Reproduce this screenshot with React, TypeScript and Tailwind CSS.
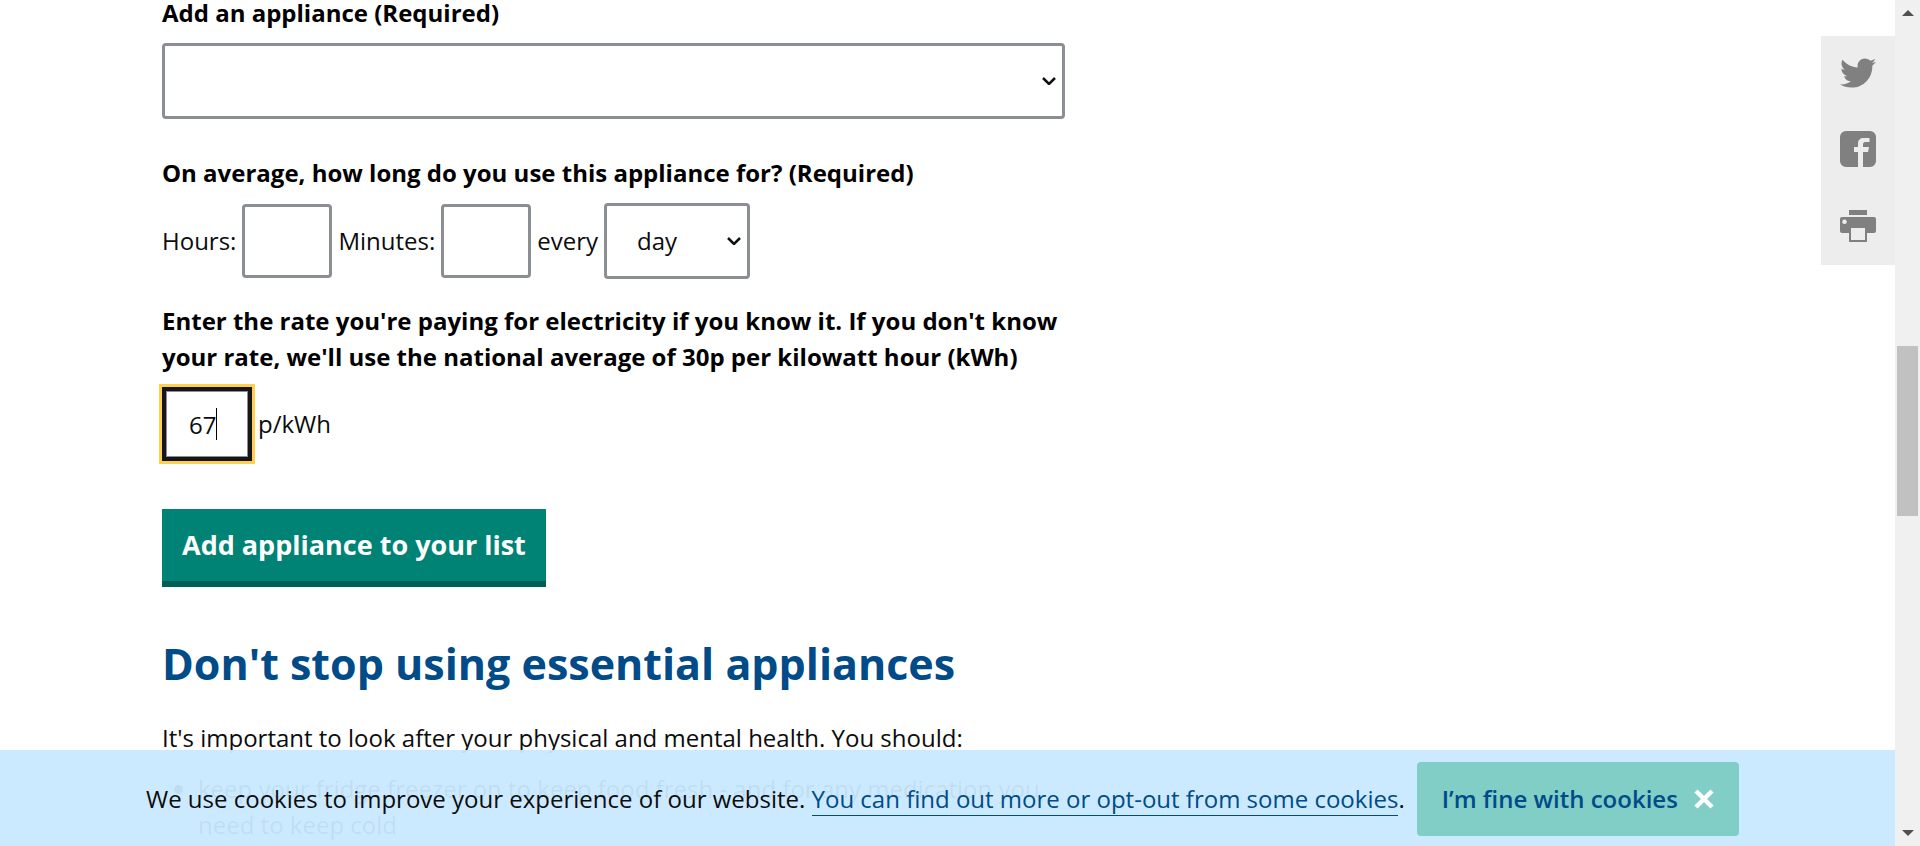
import type { ReactNode } from "react";
import { FaTwitter } from "react-icons/fa";

const field =
  "rounded border-3 border-[#8b8e92] bg-white text-2xl/9 text-[#0b0c0c] outline-none";

function Chevron() {
  return (
    <svg
      viewBox="0 0 14 8"
      aria-hidden="true"
      className="pointer-events-none absolute right-[9px] top-1/2 h-2 w-3.5 -translate-y-1/2"
      fill="none"
      stroke="#111"
      strokeWidth="2.500"
    >
      <path d="M1 1l6 6 6-6" />
    </svg>
  );
}

function ShareLink({ label, children }: { label: string; children: ReactNode }) {
  return (
    <a href="#share" aria-label={label} className="flex h-9 w-9 items-center justify-center">
      {children}
    </a>
  );
}

function ShareBar() {
  return (
    <nav
      aria-label="Share this page"
      className="absolute right-0 top-9 flex w-[74px] flex-col items-center gap-10 bg-[#ededed] pb-[22px] pt-[19px] text-[#808080]"
    >
      <ShareLink label="Share on Twitter">
        <FaTwitter className="h-9 w-9" />
      </ShareLink>
      <ShareLink label="Share on Facebook">
        <svg viewBox="0 0 36 36" className="h-9 w-9" fill="currentColor">
          <path d="M6 0h24a6 6 0 0 1 6 6v24a6 6 0 0 1-6 6h-7V21h5l1-5h-6v-2.500c0-1.500.5-2.500 2.500-2.500h4V7h-5.500c-4 0-6 2-6 5.500V16h-4v5h4v15H6a6 6 0 0 1-6-6V6a6 6 0 0 1 6-6z" />
        </svg>
      </ShareLink>
      <ShareLink label="Print this page">
        <svg viewBox="0 0 36 36" className="h-9 w-9" fill="currentColor" fillRule="evenodd">
          <path d="M9 3h18v5H9z" />
          <path d="M2 10h32a2 2 0 0 1 2 2v12a2 2 0 0 1-2 2h-7v9H9v-9H2a2 2 0 0 1-2-2V12a2 2 0 0 1 2-2zM11 21v12h14V21zM4.500 12.500a2.300 2.300 0 1 0 .01 0z" />
        </svg>
      </ShareLink>
    </nav>
  );
}

function ScrollTrack() {
  return (
    <div aria-hidden="true" className="flex w-[25px] shrink-0 flex-col items-center bg-[#f0f0f0] py-2.5">
      <svg viewBox="0 0 12 6" className="h-1.5 w-3" fill="#505050">
        <path d="M6 0l6 6H0z" />
      </svg>
      <div className="flex w-full grow flex-col items-center">
        <div className="grow-[330]" />
        <div className="h-[170px] w-[21px] bg-[#c1c1c1]" />
        <div className="grow-[314]" />
      </div>
      <svg viewBox="0 0 12 6" className="h-1.5 w-3" fill="#505050">
        <path d="M0 0h12L6 6z" />
      </svg>
    </div>
  );
}

function CookieBanner() {
  return (
    <div className="absolute inset-x-0 bottom-0 flex items-center bg-[#c9e9ff]/95 pb-2.5 pl-[146px] pt-3">
      <p className="text-2xl/9 text-[#0b0c0c]">
        We use cookies to improve your experience of our website.{" "}
        <a href="#cookies" className="border-b border-[#004b88] text-[#004b88]">
          You can find out more or opt-out from some cookies
        </a>
        .
      </p>
      <button
        type="button"
        className="ml-3 flex h-[74px] items-center gap-4 rounded bg-[#81cec6] px-[25px] text-2xl/9 font-semibold text-[#004b88]"
      >
        I’m fine with cookies
        <svg viewBox="0 0 20 20" aria-hidden="true" className="h-5 w-5" stroke="#fff" strokeWidth="4.500">
          <path d="M2 2l16 16M18 2L2 18" />
        </svg>
      </button>
    </div>
  );
}

export default function App() {
  return (
    <div className="flex h-screen overflow-hidden bg-white font-['Open_Sans','Noto_Sans',sans-serif] text-2xl/9 text-[#0b0c0c]">
      <div className="relative min-w-0 grow overflow-hidden">
        <main className="-mt-[5px] ml-[162px] max-w-[903px]">
          <form>
            <label htmlFor="appliance" className="block font-bold text-black">
              Add an appliance (Required)
            </label>
            <div className="relative mt-3">
              <select id="appliance" className={`${field} h-[76px] w-full appearance-none px-[30px]`}>
                <option></option>
              </select>
              <Chevron />
            </div>

            <fieldset className="mt-9">
              <legend className="font-bold text-black">
                On average, how long do you use this appliance for? (Required)
              </legend>
              <div className="mt-3 flex items-center gap-1.5">
                <label htmlFor="hours">Hours:</label>
                <input id="hours" type="text" className={`${field} h-[74px] w-[90px] px-6`} />
                <label htmlFor="minutes">Minutes:</label>
                <input id="minutes" type="text" className={`${field} h-[74px] w-[90px] px-6`} />
                <label htmlFor="period">every</label>
                <div className="relative">
                  <select id="period" className={`${field} h-[76px] w-[146px] appearance-none px-[30px]`}>
                    <option>day</option>
                    <option>week</option>
                    <option>month</option>
                  </select>
                  <Chevron />
                </div>
              </div>
            </fieldset>

            <label htmlFor="rate" className="mt-6 block font-bold text-black">
              Enter the rate you're paying for electricity if you know it. If you don't know your
              rate, we'll use the national average of 30p per kilowatt hour (kWh)
            </label>
            <div className="mt-3 flex items-center gap-1.5">
              <div className="relative">
                <input
                  id="rate"
                  type="text"
                  defaultValue="67"
                  className="block h-[74px] w-[90px] border-4 border-[#161616] px-[23px] text-2xl/9 text-[#0b0c0c] caret-transparent shadow-[inset_0_0_0_1px_#8b8e92] outline-3 outline-[#ffd04f]"
                />
                <span aria-hidden="true" className="absolute left-[54px] top-[21px] h-8 w-px bg-black" />
              </div>
              <span>p/kWh</span>
            </div>

            <button
              type="button"
              className="mt-12 block h-[78px] border-b-6 border-[#005f56] bg-[#008375] px-5 text-[27px]/9 font-bold text-white"
            >
              Add appliance to your list
            </button>
          </form>

          <h2 className="mt-12 text-[43px]/[58px] font-bold text-[#004b88]">
            Don't stop using essential appliances
          </h2>
          <p className="mt-[27px]">
            It's important to look after your physical and mental health. You should:
          </p>
          <ul className="mt-[15px] list-disc pl-9">
            <li>
              keep your fridge freezer on to keep food fresh - and for any medication you need to
              keep cold
            </li>
          </ul>
        </main>
        <ShareBar />
        <CookieBanner />
      </div>
      <ScrollTrack />
    </div>
  );
}
